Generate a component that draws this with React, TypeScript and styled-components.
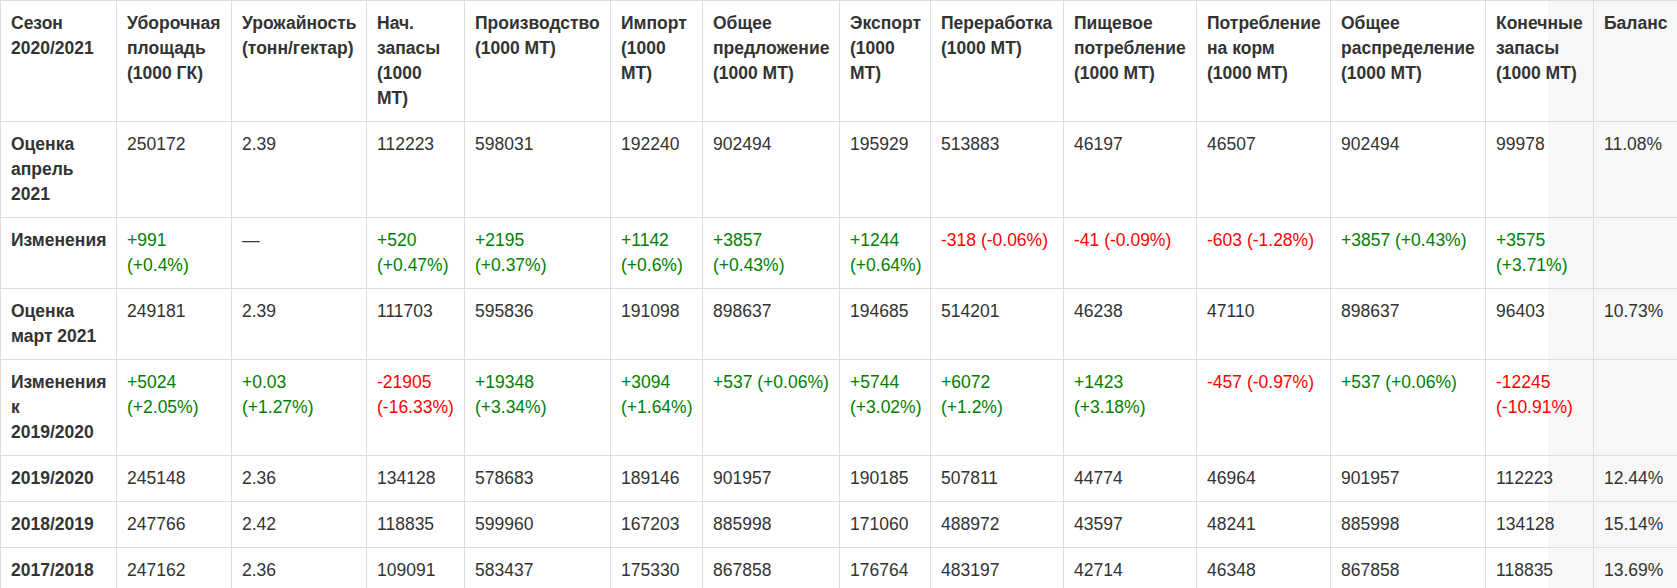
import React from "react";
import styled, { createGlobalStyle } from "styled-components";

const GlobalStyle = createGlobalStyle`
  html, body {
    margin: 0;
    padding: 0;
    background: #fff;
  }
  body {
    font-family: "Liberation Sans", Arial, sans-serif;
    font-size: 17.5px;
    line-height: 25px;
    color: #333;
  }
`;

const Page = styled.div`
  width: 1677px;
  overflow: hidden;
  background: linear-gradient(to right, #fff 1548px, #f7f7f7 1548px);
`;

const Table = styled.table`
  width: 1684px;
  table-layout: fixed;
  border-collapse: collapse;
  border-spacing: 0;
  background: transparent;
`;

const HeadCell = styled.th`
  padding: 10px;
  border: 1px solid #ddd;
  text-align: left;
  vertical-align: top;
  font-weight: bold;
`;

const RowHead = styled.th`
  padding: 10px;
  border: 1px solid #ddd;
  text-align: left;
  vertical-align: top;
  font-weight: bold;
`;

const Cell = styled.td`
  padding: 10px;
  border: 1px solid #ddd;
  vertical-align: top;
`;

const Delta = styled.span<{ $tone: "up" | "down" | "flat" }>`
  color: ${p => (p.$tone === "up" ? "#008000" : p.$tone === "down" ? "#ff0000" : "#333")};
`;

const widths = [116, 115, 135, 98, 146, 92, 137, 91, 133, 133, 134, 155, 108, 91];

const headers = [
  "Сезон 2020/2021",
  "Уборочная площадь (1000 ГК)",
  "Урожайность (тонн/гектар)",
  "Нач. запасы (1000 МТ)",
  "Производство (1000 МТ)",
  "Импорт (1000 МТ)",
  "Общее предложение (1000 МТ)",
  "Экспорт (1000 МТ)",
  "Переработка (1000 МТ)",
  "Пищевое потребление (1000 МТ)",
  "Потребление на корм (1000 МТ)",
  "Общее распределение (1000 МТ)",
  "Конечные запасы (1000 МТ)",
  "Баланс",
];

type Row = { label: string; delta?: boolean; values: string[] };

const rows: Row[] = [
  {
    label: "Оценка апрель 2021",
    values: ["250172", "2.39", "112223", "598031", "192240", "902494", "195929", "513883", "46197", "46507", "902494", "99978", "11.08%"],
  },
  {
    label: "Изменения",
    delta: true,
    values: [
      "+991 (+0.4%)",
      "—",
      "+520 (+0.47%)",
      "+2195 (+0.37%)",
      "+1142 (+0.6%)",
      "+3857 (+0.43%)",
      "+1244 (+0.64%)",
      "-318 (-0.06%)",
      "-41 (-0.09%)",
      "-603 (-1.28%)",
      "+3857 (+0.43%)",
      "+3575 (+3.71%)",
      "",
    ],
  },
  {
    label: "Оценка март 2021",
    values: ["249181", "2.39", "111703", "595836", "191098", "898637", "194685", "514201", "46238", "47110", "898637", "96403", "10.73%"],
  },
  {
    label: "Изменения к 2019/2020",
    delta: true,
    values: [
      "+5024 (+2.05%)",
      "+0.03 (+1.27%)",
      "-21905 (-16.33%)",
      "+19348 (+3.34%)",
      "+3094 (+1.64%)",
      "+537 (+0.06%)",
      "+5744 (+3.02%)",
      "+6072 (+1.2%)",
      "+1423 (+3.18%)",
      "-457 (-0.97%)",
      "+537 (+0.06%)",
      "-12245 (-10.91%)",
      "",
    ],
  },
  {
    label: "2019/2020",
    values: ["245148", "2.36", "134128", "578683", "189146", "901957", "190185", "507811", "44774", "46964", "901957", "112223", "12.44%"],
  },
  {
    label: "2018/2019",
    values: ["247766", "2.42", "118835", "599960", "167203", "885998", "171060", "488972", "43597", "48241", "885998", "134128", "15.14%"],
  },
  {
    label: "2017/2018",
    values: ["247162", "2.36", "109091", "583437", "175330", "867858", "176764", "483197", "42714", "46348", "867858", "118835", "13.69%"],
  },
];

const toneOf = (v: string) => (v.startsWith("+") ? "up" : v.startsWith("-") ? "down" : "flat");

export default function App() {
  return (
    <>
      <GlobalStyle />
      <Page>
        <Table>
          <colgroup>
            {widths.map((w, i) => (
              <col key={i} style={{ width: w }} />
            ))}
          </colgroup>
          <thead>
            <tr>
              {headers.map(h => (
                <HeadCell key={h}>{h}</HeadCell>
              ))}
            </tr>
          </thead>
          <tbody>
            {rows.map(r => (
              <tr key={r.label}>
                <RowHead>{r.label}</RowHead>
                {r.values.map((v, i) => (
                  <Cell key={i}>{r.delta ? <Delta $tone={toneOf(v)}>{v}</Delta> : v}</Cell>
                ))}
              </tr>
            ))}
          </tbody>
        </Table>
      </Page>
    </>
  );
}
